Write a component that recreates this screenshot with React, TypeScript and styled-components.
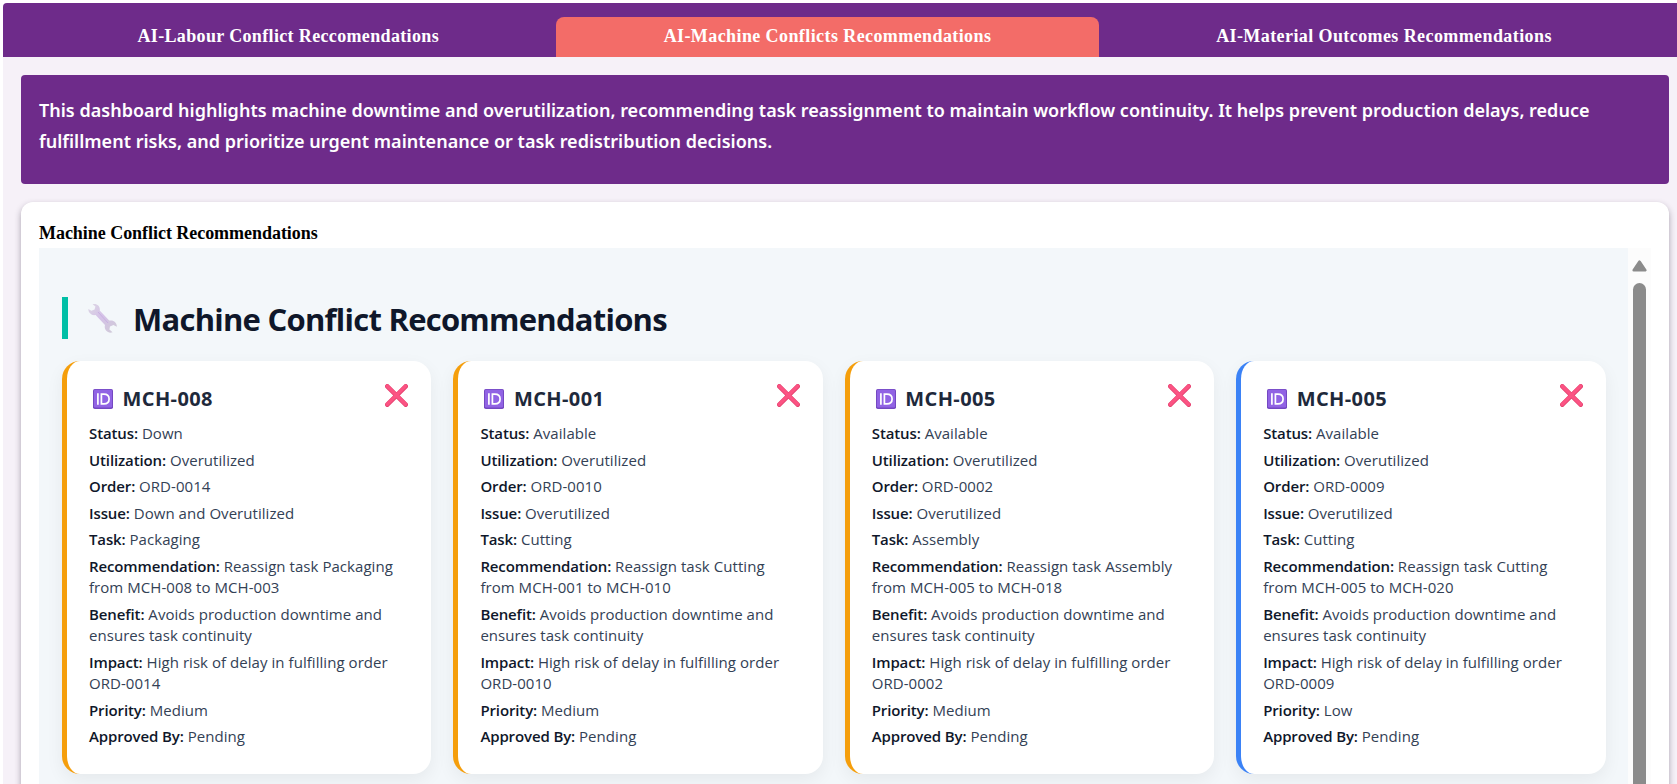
import React from "react";
import styled, { createGlobalStyle } from "styled-components";

const Global = createGlobalStyle`
  * { box-sizing: border-box; }
  html, body { margin: 0; height: 100%; overflow: hidden; background: #fff; }
`;

const serif = `"Liberation Serif", "Times New Roman", serif`;
const sans = `"Open Sans", "Noto Sans", sans-serif`;

const Page = styled.div`
  height: 784px;
  padding: 3px 0 0 3px;
  overflow: hidden;
`;
const Shell = styled.div`
  height: 100%;
  background: #f6f1f8;
  border-top-left-radius: 4px;
  overflow: hidden;
`;
const TabBar = styled.nav`
  display: flex;
  align-items: flex-end;
  gap: 9.5px;
  height: 54px;
  padding-left: 27px;
  background: #6e2b8a;
`;
const Tab = styled.button<{ $width: number; $active?: boolean }>`
  flex: 0 0 ${(p) => p.$width}px;
  height: 40px;
  padding: 0 0 1px;
  border: 0;
  border-radius: 8px 8px 0 0;
  background: ${(p) => (p.$active ? "#f36c68" : "transparent")};
  color: #fff;
  font: bold 18px/37px ${serif};
`;
const TabText = styled.span<{ $track: number }>`
  letter-spacing: ${(p) => p.$track}px;
`;
const Content = styled.main`
  display: flex;
  flex-direction: column;
  gap: 18px;
  padding: 18px 8px 0 18px;
`;
const Banner = styled.p`
  height: 109px;
  margin: 0;
  padding: 20px 18px;
  border-radius: 4px;
  background: #6e2b8a;
  color: #fff;
  font: 600 18px/31px "Noto Sans", sans-serif;
  letter-spacing: 0.013px;
`;
const Line = styled.span`
  display: block;
  white-space: nowrap;
`;
const Panel = styled.section`
  height: 640px;
  padding: 18px;
  border-radius: 12px;
  background: #fff;
  box-shadow: 0 3px 6px rgba(40, 30, 50, 0.38);
`;
const PanelTitle = styled.h3`
  height: 28px;
  margin: 0;
  color: #000;
  font: bold 18px/26px ${serif};
  letter-spacing: -0.04px;
`;
const Viewport = styled.div`
  display: flex;
  height: 590px;
`;
const Board = styled.div`
  flex: 1;
  padding: 49px 22.5px 0 23px;
  background: #f3f7fa;
`;
const Scrollbar = styled.div`
  display: flex;
  flex-direction: column;
  align-items: center;
  width: 23px;
  padding-top: 12px;
  background: #fcfcfc;
`;
const Thumb = styled.div`
  flex: 1;
  width: 13px;
  margin-top: 11px;
  border-radius: 7px 7px 0 0;
  background: #8b8b8b;
`;
const Heading = styled.h1`
  display: flex;
  align-items: center;
  height: 42px;
  margin: 0 0 22px;
  padding-left: 20px;
  border-left: 6px solid #00bfa6;
  color: #0f172a;
  font: 700 31px/42px ${sans};
  letter-spacing: -0.75px;
  white-space: nowrap;
  svg { margin-right: 16px; }
`;
const HeadingText = styled.span`
  padding-top: 2px;
`;
const Grid = styled.div`
  display: grid;
  grid-template-columns: repeat(4, 1fr);
  gap: 22px;
`;
const Card = styled.article<{ $accent: string }>`
  height: 413px;
  padding: 21px 23px 0 22px;
  border-left: 5px solid ${(p) => p.$accent};
  border-radius: 18px;
  background: #fff;
  box-shadow: 0 6px 18px rgba(0, 0, 0, 0.06);
`;
const CardHead = styled.header`
  display: flex;
  align-items: flex-start;
  height: 41px;
`;
const MachineId = styled.h2`
  flex: 1;
  margin: 3px 0 0 9.5px;
  color: #1e293b;
  font: 700 20px/27px ${sans};
  letter-spacing: 0.4px;
`;
const IdIcon = styled.svg`
  margin: 7px 0 0 4px;
`;
const Cross = styled.svg`
  margin-top: 2px;
`;
const Fields = styled.div`
  display: flex;
  flex-direction: column;
  gap: 5.33px;
`;
const Field = styled.p`
  margin: 0;
  color: #334155;
  font: 400 15px/21.28px ${sans};
  letter-spacing: 0.05px;
  white-space: nowrap;
`;
const Label = styled.strong`
  color: #0f172a;
  font-weight: 600;
  letter-spacing: -0.12px;
`;

function Wrench() {
  return (
    <svg width="29" height="30" viewBox="0 0 29 30">
      <defs>
        <linearGradient id="metal" x1="0" y1="0" x2="1" y2="1">
          <stop offset="0" stopColor="#dcd8e3" />
          <stop offset=".45" stopColor="#d5c2e8" />
          <stop offset="1" stopColor="#cfcbd6" />
        </linearGradient>
      </defs>
      <path
        fill="url(#metal)"
        d="M4.6 1.3C8.4-.2 12.6 3 11.7 7.6L21.2 17.6C25.4 16.5 29 19.6 28.9 23.8L25.4 22 22 23.6 21.4 26.6 24.6 29.2C20 31 15.6 27 17 22L7.6 12C3.8 12.9.2 10 .3 5.9L3.4 7.8 6.6 6.6 7.4 3.6Z"
      />
      <path d="M10 9L20 20" stroke="#c9b0e2" strokeWidth="1" fill="none" />
    </svg>
  );
}

function IdBadge() {
  return (
    <IdIcon width="20" height="20" viewBox="0 0 20 20">
      <rect width="20" height="20" rx="1.8" fill="#7448c2" />
      <rect x="1" y=".8" width="18" height="17.6" rx="1.2" fill="#9163e4" />
      <path d="M4.9 4.3V15.7M8.4 5.1H10.8C14.4 5.1 16.1 7.1 16.1 10S14.4 14.9 10.8 14.9H8.4Z" fill="none" stroke="#fff" strokeWidth="1.7" />
    </IdIcon>
  );
}

function CrossMark() {
  return (
    <Cross width="23" height="23" viewBox="0 0 23 23">
      <path d="M2.3 2.3L20.7 20.7M20.7 2.3L2.3 20.7" stroke="#e5416f" strokeWidth="4.6" strokeLinecap="round" />
      <path d="M2.3 2.1L20.5 20.3M20.5 2.1L2.3 20.3" stroke="#fb5383" strokeWidth="3.4" strokeLinecap="round" />
    </Cross>
  );
}

interface Machine {
  id: string;
  status: string;
  order: string;
  issue: string;
  task: string;
  target: string;
  priority: string;
  accent: string;
}

const machines: Machine[] = [
  { id: "MCH-008", status: "Down", order: "ORD-0014", issue: "Down and Overutilized", task: "Packaging", target: "MCH-003", priority: "Medium", accent: "#f59e0b" },
  { id: "MCH-001", status: "Available", order: "ORD-0010", issue: "Overutilized", task: "Cutting", target: "MCH-010", priority: "Medium", accent: "#f59e0b" },
  { id: "MCH-005", status: "Available", order: "ORD-0002", issue: "Overutilized", task: "Assembly", target: "MCH-018", priority: "Medium", accent: "#f59e0b" },
  { id: "MCH-005", status: "Available", order: "ORD-0009", issue: "Overutilized", task: "Cutting", target: "MCH-020", priority: "Low", accent: "#3b82f6" },
];

function MachineCard({ m }: { m: Machine }) {
  return (
    <Card $accent={m.accent}>
      <CardHead>
        <IdBadge />
        <MachineId>{m.id}</MachineId>
        <CrossMark />
      </CardHead>
      <Fields>
        <Field><Label>Status:</Label> {m.status}</Field>
        <Field><Label>Utilization:</Label> Overutilized</Field>
        <Field><Label>Order:</Label> {m.order}</Field>
        <Field><Label>Issue:</Label> {m.issue}</Field>
        <Field><Label>Task:</Label> {m.task}</Field>
        <Field><Label>Recommendation:</Label> Reassign task {m.task}<br />from {m.id} to {m.target}</Field>
        <Field><Label>Benefit:</Label> Avoids production downtime and<br />ensures task continuity</Field>
        <Field><Label>Impact:</Label> High risk of delay in fulfilling order<br />{m.order}</Field>
        <Field><Label>Priority:</Label> {m.priority}</Field>
        <Field><Label>Approved By:</Label> Pending</Field>
      </Fields>
    </Card>
  );
}

export default function App() {
  return (
    <Page>
      <Global />
      <Shell>
        <TabBar>
          <Tab $width={516.5}><TabText $track={0.35}>AI-Labour Conflict Reccomendations</TabText></Tab>
          <Tab $width={543} $active><TabText $track={0.41}>AI-Machine Conflicts Recommendations</TabText></Tab>
          <Tab $width={551}><TabText $track={0.41}>AI-Material Outcomes Recommendations</TabText></Tab>
        </TabBar>
        <Content>
          <Banner>
            <Line>This dashboard highlights machine downtime and overutilization, recommending task reassignment to maintain workflow continuity. It helps prevent production delays, reduce</Line>
            <Line>fulfillment risks, and prioritize urgent maintenance or task redistribution decisions.</Line>
          </Banner>
          <Panel>
            <PanelTitle>Machine Conflict Recommendations</PanelTitle>
            <Viewport>
              <Board>
                <Heading><Wrench /><HeadingText>Machine Conflict Recommendations</HeadingText></Heading>
                <Grid>{machines.map((m, i) => <MachineCard key={i} m={m} />)}</Grid>
              </Board>
              <Scrollbar>
                <svg width="15" height="12" viewBox="0 0 15 12">
                  <path d="M7.5 1.8L13.2 10.2H1.8Z" fill="#8b8b8b" stroke="#8b8b8b" strokeWidth="2.8" strokeLinejoin="round" />
                </svg>
                <Thumb />
              </Scrollbar>
            </Viewport>
          </Panel>
        </Content>
      </Shell>
    </Page>
  );
}
